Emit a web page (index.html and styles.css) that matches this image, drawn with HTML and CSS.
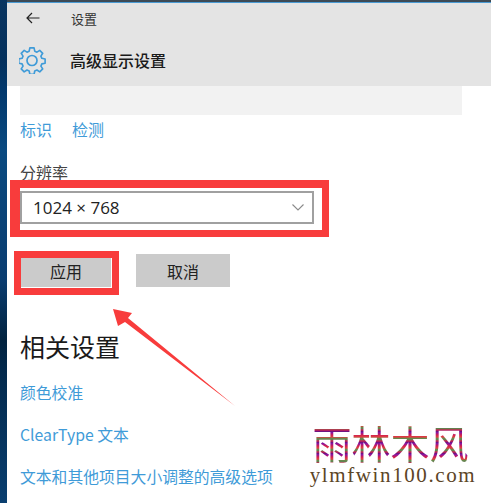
FILE: index.html
```html
<!DOCTYPE html>
<html lang="zh-CN">
<head>
    <meta charset="UTF-8">
    <title>高级显示设置</title>
    <link rel="stylesheet" href="styles.css">
</head>
<body>
    <div class="desktop-edge"></div>
    <div class="window">
        <div class="title-strip"></div>
        <header class="header">
            <div class="nav-row">
                <svg class="back-icon" width="14" height="12" viewBox="0 0 14 12">
                    <path d="M6 1 1 6l5 5M1 6h12.500" fill="none" stroke="#222" stroke-width="1.200"/>
                </svg>
                <span class="nav-title">设置</span>
            </div>
            <div class="page-row">
                <svg class="gear-icon" width="27" height="27" viewBox="0 0 27 27">
                    <path d="M11.300 1.500h4.400l.7 3.400 2.300 1 2.900-1.900 3.100 3.100-1.900 2.900 1 2.300 3.400.7v4.400l-3.400.7-1 2.300 1.900 2.900-3.100 3.100-2.900-1.900-2.300 1-.7 3.400h-4.400l-.7-3.400-2.300-1-2.900 1.900-3.100-3.100 1.900-2.900-1-2.300-3.400-.7v-4.400l3.400-.7 1-2.300-1.900-2.900 3.100-3.100 2.900 1.900 2.300-1z" transform="translate(0 -.5) scale(.96)" fill="none" stroke="#3f9bd8" stroke-width="1.700" stroke-linejoin="round"/>
                    <circle cx="13" cy="13.500" r="5" fill="none" stroke="#3f9bd8" stroke-width="1.700"/>
                </svg>
                <span class="page-title">高级显示设置</span>
            </div>
        </header>

        <main class="content">
            <div class="preview"></div>
            <div class="link-row">
                <a class="link">标识</a>
                <a class="link">检测</a>
            </div>
            <div class="field-label">分辨率</div>
            <div class="select">
                <span>1024 × 768</span>
                <svg width="12" height="7" viewBox="0 0 12 7">
                    <path d="M.5.500 6 6 11.500.500" fill="none" stroke="#8a8a8a" stroke-width="1.100"/>
                </svg>
            </div>
            <div class="button-row">
                <button class="btn btn-apply">应用</button>
                <button class="btn btn-cancel">取消</button>
            </div>
            <h2 class="section-title">相关设置</h2>
            <a class="link link-block">颜色校准</a>
            <a class="link link-block">ClearType 文本</a>
            <a class="link link-block">文本和其他项目大小调整的高级选项</a>
        </main>
    </div>

    <!-- 标注 -->
    <div class="mark mark-select"></div>
    <div class="mark mark-apply"></div>
    <svg class="arrow" width="130" height="100" viewBox="0 0 130 100">
        <path d="M0 1 19 5 15 10 122 98 12 14 5 18z" fill="#f83c3c"/>
    </svg>
    <div class="watermark">
        <div class="watermark-cn">雨林木风</div>
        <div class="watermark-url">ylmfwin100.com</div>
    </div>
</body>
</html>
```
FILE: styles.css
```css
* {
    margin: 0;
    padding: 0;
    box-sizing: border-box;
}

body {
    display: flex;
    width: 491px;
    height: 503px;
    overflow: hidden;
    background-color: #fff;
    font-family: "Noto Sans CJK SC", "Liberation Sans", sans-serif;
    color: #222;
}

.desktop-edge {
    width: 7px;
    background: linear-gradient(#0a3560 0, #04305c 60px, #02386c 90px, #0a4a80 150px, #0a3d70 280px, #02233f 340px, #03294c 370px, #0a3f70 503px);
}

.window {
    flex: 1;
    display: flex;
    flex-direction: column;
    min-width: 0;
}

.title-strip {
    flex-shrink: 0;
    height: 3px;
    background-color: #3d4a55;
    border-bottom: 1px solid #4a9bd4;
}

.header {
    flex-shrink: 0;
    height: 83px;
    background-color: #e4e4e4;
    padding-left: 19px;
}

.nav-row {
    display: flex;
    align-items: center;
    height: 30px;
}

.nav-title {
    margin-left: 31px;
    font-size: 13px;
    color: #333;
}

.page-row {
    display: flex;
    align-items: center;
    margin-top: 7px;
    margin-left: -7px;
    height: 40px;
}

.page-title {
    margin-left: 24px;
    font-size: 16px;
    font-weight: 500;
    color: #1a1a1a;
}

.content {
    padding-left: 13px;
}

.preview {
    width: 442px;
    height: 29px;
    background-color: #f2f2f2;
}

.link-row {
    display: flex;
    gap: 20px;
    margin-top: 4px;
    height: 21px;
}

.link {
    font-size: 16px;
    line-height: 21px;
    color: #3f9bd8;
}

.link-block {
    display: block;
    margin-bottom: 21px;
    font-size: 15.800px;
}

.field-label {
    margin-top: 22px;
    font-size: 16px;
    line-height: 20px;
    color: #444;
}

.select {
    display: flex;
    justify-content: space-between;
    align-items: center;
    width: 294px;
    height: 33px;
    margin-top: 9px;
    padding: 0 8px 0 11px;
    border: 2px solid #a0a0a0;
    font-family: "Open Sans", "Liberation Sans", sans-serif;
    font-size: 17px;
    color: #222;
}

.button-row {
    display: flex;
    gap: 25px;
    margin-top: 30px;
}

.btn {
    height: 33px;
    border: none;
    background-color: #cbcbcb;
    font-family: inherit;
    font-size: 16px;
    color: #222;
}

.btn-apply {
    width: 90px;
    margin-left: 1px;
}

.btn-cancel {
    width: 94px;
}

.section-title {
    margin-top: 42px;
    margin-bottom: 19px;
    font-size: 25px;
    line-height: 34px;
    font-weight: 400;
    color: #1a1a1a;
}

.mark {
    position: absolute;
    border-style: solid;
    border-color: #f83c3c;
}

.mark-select {
    left: 10px;
    top: 180px;
    width: 319px;
    height: 57px;
    border-width: 8px 7px 7px 10px;
}

.mark-apply {
    left: 14px;
    top: 251px;
    width: 105px;
    height: 44px;
    border-width: 7px;
}

.arrow {
    position: absolute;
    left: 113px;
    top: 308px;
}

.watermark {
    position: absolute;
    left: 308px;
    top: 421px;
    width: 170px;
    text-align: center;
}

.watermark-cn {
    padding-right: 5px;
    font-size: 39px;
    line-height: 42px;
    background: repeating-linear-gradient(#7a10b0 0, #d02050 3px, #e04040 5px, #40a050 7px, #d02050 9px, #501090 11px);
    -webkit-background-clip: text;
    background-clip: text;
    color: transparent;
}

.watermark-url {
    font-family: "Liberation Serif", serif;
    font-size: 21px;
    line-height: 24px;
    letter-spacing: 1.600px;
    white-space: nowrap;
    color: #5c4526;
}
```
